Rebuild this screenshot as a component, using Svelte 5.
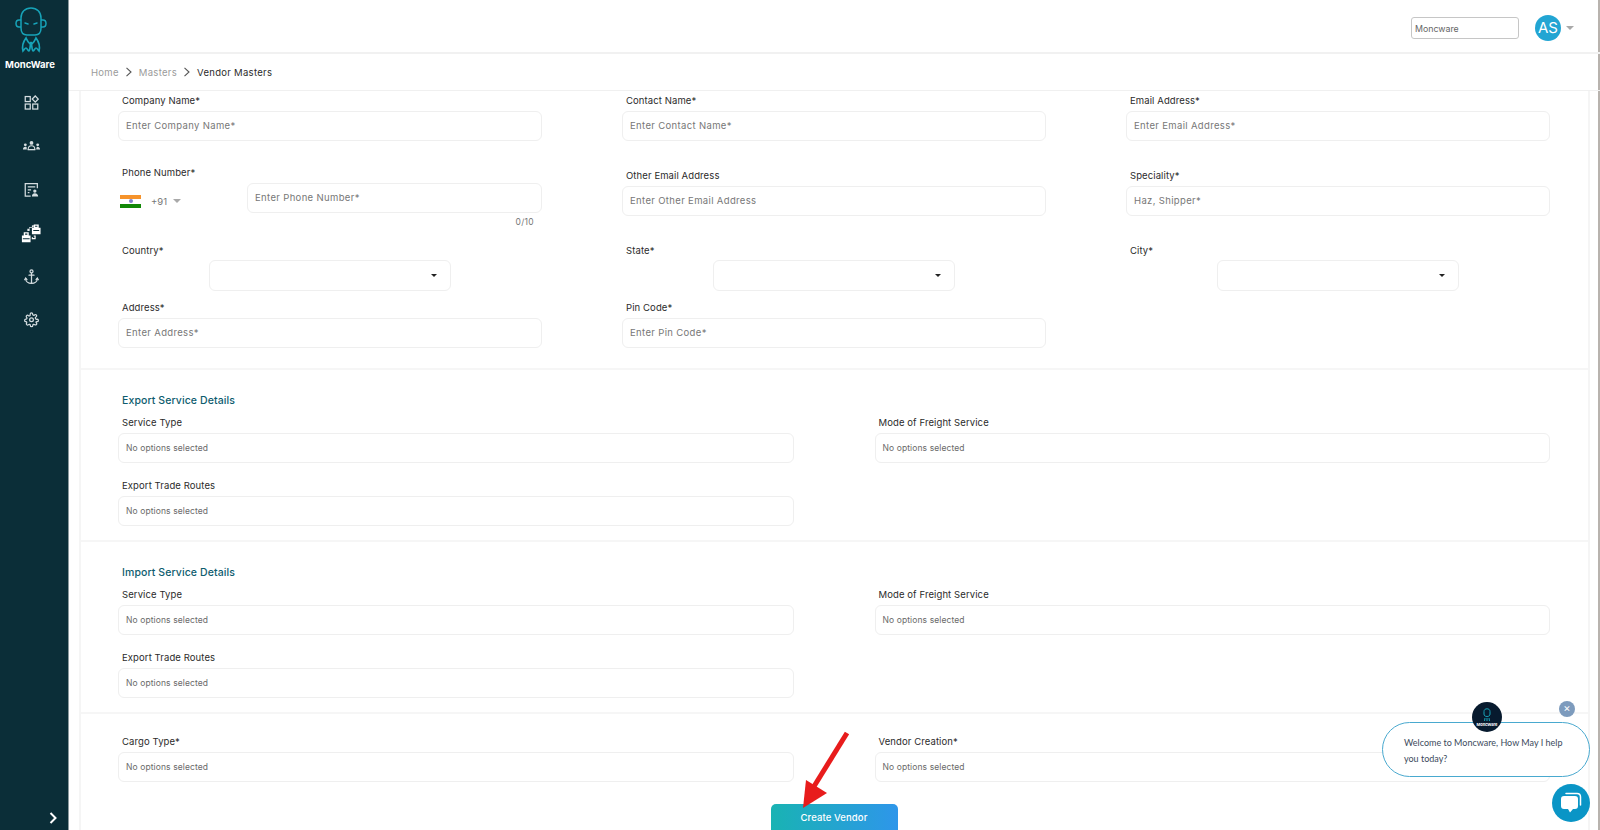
<script>
  const crumbs = ["Home", "Masters"];
  const row1 = [
    { label: "Company Name*", ph: "Enter Company Name*" },
    { label: "Contact Name*", ph: "Enter Contact Name*" },
    { label: "Email Address*", ph: "Enter Email Address*" },
  ];
  const locations = ["Country*", "State*", "City*"];
  const sections = ["Export Service Details", "Import Service Details"];
</script>

{#snippet field(label, ph)}
  <div class="field">
    <span class="lbl">{label}</span>
    <div class="box ph">{ph}</div>
  </div>
{/snippet}

{#snippet multi(label)}
  <div class="field">
    <span class="lbl">{label}</span>
    <div class="box none">No options selected</div>
  </div>
{/snippet}

<div class="app">
  <aside class="side">
    <svg class="logo" width="32" height="46" viewBox="0 0 32 46" fill="none" stroke="#17a3b8" stroke-width="1.5">
      <path d="M6 21V11C6 5 10 1 16 1s10 4 10 10v10c0 4-2 7-6 7h-8c-4 0-6-3-6-7z" />
      <path d="M6 13H4c-2 0-3 1.500-3 3.500S2 20 4 20h2M26 13h2c2 0 3 1.500 3 3.500S30 20 28 20h-2" />
      <path d="M10 16l3 1M19 17l3-1" stroke-linecap="round" />
      <path d="M11 31c-3 4-4 9-3 13 1-1 2-3 3-3s2 3 3 3 1-5 2-9c1 4 1 9 2 9s2-3 3-3 2 2 3 3c1-4 0-9-3-13-1 3-3 5-5 7-2-2-4-4-5-7z" stroke-width="1.700" />
    </svg>
    <div class="brand">MoncWare</div>

    <nav class="nav">
      <svg width="15" viewBox="0 0 18 18" fill="none" stroke="#d5dde0" stroke-width="1.500">
        <rect x="1.500" y="1.500" width="6" height="6" /><rect x="1.500" y="10.500" width="6" height="6" /><rect x="10.500" y="10.500" width="6" height="6" /><path d="M13.500 .8l3.600 3.700-3.600 3.700-3.600-3.700z" />
      </svg>
      <svg width="19" viewBox="0 0 20 18" fill="#d5dde0">
        <circle cx="10" cy="6" r="2" /><path d="M6.500 13c0-2.500 1.500-4 3.500-4s3.500 1.500 3.500 4z" fill="none" stroke="#d5dde0" stroke-width="1.200" /><circle cx="3.500" cy="8" r="1.500" /><circle cx="16.500" cy="8" r="1.500" /><path d="M1 13c0-2 1-3 2.500-3S5 10 5 13zM15 13c0-2 .5-3 1.500-3s2.500 1 2.500 3z" /><rect x="6" y="12.500" width="8" height="1" />
      </svg>
      <svg width="15" viewBox="0 0 18 18" fill="none" stroke="#d5dde0" stroke-width="1.500">
        <path d="M16 7V1.500H1.500v15H8" /><path d="M4.500 5.500h9M4.500 9h4M4.500 12.500h2" /><circle cx="13" cy="10.500" r="2" fill="#d5dde0" stroke="none" /><path d="M9.500 17c0-2.500 1-4 3.500-4s4 1.500 4 4z" fill="#d5dde0" stroke="none" />
      </svg>
      <svg width="20" viewBox="0 0 22 22" fill="#fff">
        <path d="M7 9V6.500h2V4.500h3V3l2-.5v2l-2 1H9.500V9z" opacity=".9" />
        <path d="M12 5.500h2V2h5.500v3.500H21.500v7H12z" /><path d="M13.500 8.500h6.500M15.500 3.800h2.500" stroke="#0b2e38" stroke-width="1.200" />
        <path d="M1 14h2v-3.500h5.500V14h2v7.500H1z" /><path d="M2 17.500h7.500M4.500 12.500h2.500" stroke="#0b2e38" stroke-width="1.200" />
        <path d="M14 14.500h1.500v3h-3v-1.500" fill="none" stroke="#fff" stroke-width="1.300" />
      </svg>
      <svg width="15" viewBox="0 0 18 20" fill="none" stroke="#d5dde0" stroke-width="1.500" stroke-linecap="round">
        <circle cx="9" cy="3.500" r="1.800" /><path d="M9 5.500V18M6 8h6M2 12c0 3.500 3 6 7 6s7-2.500 7-6" /><path d="M.8 13.500L2 11.500l1.500 2M14.500 13.500l1.500-2 1.200 2" />
      </svg>
      <svg width="15" viewBox="0 0 24 24" fill="none" stroke="#d5dde0" stroke-width="2" stroke-linejoin="round">
        <circle cx="12" cy="12" r="3" /><path d="M19.400 15a1.650 1.650 0 0 0 .33 1.820l.06.06a2 2 0 1 1-2.830 2.830l-.06-.06a1.650 1.650 0 0 0-2.820 1.150V21a2 2 0 1 1-4 0v-.09a1.650 1.650 0 0 0-2.820-1.170l-.06.06a2 2 0 1 1-2.830-2.830l.06-.06A1.650 1.650 0 0 0 3.090 15H3a2 2 0 1 1 0-4h.09a1.650 1.650 0 0 0 1.170-2.820l-.06-.06a2 2 0 1 1 2.830-2.830l.06.06A1.650 1.650 0 0 0 9.900 4.200V3a2 2 0 1 1 4 0v.09a1.650 1.650 0 0 0 2.820 1.170l.06-.06a2 2 0 1 1 2.830 2.830l-.06.06A1.650 1.650 0 0 0 20.910 11H21a2 2 0 1 1 0 4h-.09a1.650 1.650 0 0 0-1.510 1z" />
      </svg>
    </nav>

    <svg class="expand" width="10" height="12" viewBox="0 0 10 12" fill="none" stroke="#fff" stroke-width="2"><path d="M2.500 1l5 5-5 5" /></svg>
  </aside>

  <div class="main">
    <header class="top">
      <div class="company">Moncware</div>
      <div class="avatar">AS</div>
      <span class="caret gray"></span>
    </header>

    <div class="crumbs">
      {#each crumbs as c}
        <span class="crumb">{c}</span>
        <svg width="8" height="10" viewBox="0 0 8 10" fill="none" stroke="#555" stroke-width="1.100"><path d="M1.500 .8L6 5 1.500 9.200" /></svg>
      {/each}
      <span class="crumb current">Vendor Masters</span>
    </div>

    <div class="form">
      <section class="block first">
        <div class="cols three">
          {#each row1 as f}{@render field(f.label, f.ph)}{/each}
        </div>

        <div class="cols three r2">
          <div class="field phone">
            <span class="lbl">Phone Number*</span>
            <div class="phone-row">
              <div class="dial">
                <span class="flag"><i></i></span>
                <span class="code">+91</span>
                <span class="caret gray"></span>
              </div>
              <div class="box ph grow">Enter Phone Number*</div>
            </div>
            <div class="count">0/10</div>
          </div>
          {@render field("Other Email Address", "Enter Other Email Address")}
          {@render field("Speciality*", "Haz, Shipper*")}
        </div>

        <div class="cols three r3">
          {#each locations as l}
            <div class="field">
              <span class="lbl">{l}</span>
              <div class="box select"><span class="caret dark"></span></div>
            </div>
          {/each}
        </div>

        <div class="cols three r4">
          {@render field("Address*", "Enter Address*")}
          {@render field("Pin Code*", "Enter Pin Code*")}
        </div>
      </section>

      {#each sections as s}
        <section class="block svc">
          <h3>{s}</h3>
          <div class="cols two">
            {@render multi("Service Type")}
            {@render multi("Mode of Freight Service")}
          </div>
          <div class="cols two r5">
            {@render multi("Export Trade Routes")}
          </div>
        </section>
      {/each}

      <section class="block last">
        <div class="cols two">
          {@render multi("Cargo Type*")}
          {@render multi("Vendor Creation*")}
        </div>
        <div class="actions"><button type="button">Create Vendor</button></div>
      </section>
    </div>
  </div>

  <!-- annotation arrow from the screenshot -->
  <svg class="arrow" width="60" height="90" viewBox="0 0 60 90">
    <path d="M52 3L18 58" stroke="#e81c1c" stroke-width="5" fill="none" />
    <path d="M11 50L32 63 8 78z" fill="#e81c1c" />
  </svg>

  <div class="chat">
    <div class="bubble">Welcome to Moncware, How May I help you today?</div>
    <div class="bot">
      <svg width="10" height="14" viewBox="0 0 10 14" fill="none" stroke="#17a3b8" stroke-width="1"><path d="M2 6V3.500C2 1.500 3.500 .8 5 .8s3 .7 3 2.700V6c0 1.500-1 2.500-3 2.500S2 7.500 2 6z" /><path d="M3 10l-.5 3M7 10l.5 3M5 10v3" /></svg>
      <span>MoncWare</span>
    </div>
    <div class="close">×</div>
    <div class="launcher">
      <svg width="24" height="24" viewBox="0 0 24 24"><path d="M7 2.500h11c2 0 3.500 1.500 3.500 3.500v8" fill="none" stroke="#fff" stroke-width="1.500" stroke-linecap="round" /><path d="M5 5h11c2 0 3 1 3 3v7c0 2-1 3-3 3h-2l-3 3.500L9 18H5c-2 0-3-1-3-3V8c0-2 1-3 3-3z" fill="#fff" /></svg>
    </div>
  </div>
</div>

<style>
  :global(body) { margin: 0; background: #fff; }
  .app {
    position: relative;
    display: flex;
    width: 1600px;
    height: 830px;
    overflow: hidden;
    font-family: Inter, "Liberation Sans", sans-serif;
    color: #2b2b2b;
    background: #fff;
  }

  .side {
    position: relative;
    flex: 0 0 68px;
    display: flex;
    flex-direction: column;
    align-items: center;
    background: #0b2e38;
    box-shadow: 1px 0 0 #8b9a9e;
  }
  .logo { margin-top: 7px; margin-left: -7px; }
  .brand { margin-top: 5px; font-size: 9.500px; font-weight: 700; color: #fff; line-height: 14px; margin-left: -8px; }
  .nav {
    display: flex; flex-direction: column; align-items: center;
    margin-top: 8.500px; margin-left: -6px;
  }
  .nav svg { display: block; height: 43.600px; }
  .expand { position: absolute; left: 48px; bottom: 6px; }

  .main { flex: 1; min-width: 0; display: flex; flex-direction: column; box-shadow: inset -2px 0 0 #b8b3ae; }

  .top {
    flex: 0 0 54px;
    display: flex; align-items: center; justify-content: flex-end;
    padding: 3px 26px 0 0;
    box-sizing: border-box;
    border-bottom: 2px solid #f1f1f1;
  }
  .company {
    width: 108px; height: 22px; box-sizing: border-box;
    border: 1px solid #c6c6c6; border-radius: 3px;
    font-size: 8.800px; line-height: 22px; padding-left: 3px; color: #666;
  }
  .avatar {
    width: 26px; height: 26px; border-radius: 50%;
    margin-left: 16px; margin-right: 5px;
    background: #22a5d3; color: #fff;
    font-size: 15px; font-weight: 400; line-height: 26px; text-align: center;
  }
  .caret { display: inline-block; width: 0; height: 0; border-left: 4px solid transparent; border-right: 4px solid transparent; }
  .caret.gray { border-top: 4px solid #a9a9a9; }
  .caret.dark { border-left-width: 3px; border-right-width: 3px; border-top: 3px solid #222; }

  .crumbs {
    flex: 0 0 37px;
    box-sizing: border-box;
    display: flex; align-items: center; gap: 6px;
    padding-left: 23px;
    border-bottom: 1.500px solid #f0f0f0;
    font-size: 9.500px; letter-spacing: .3px;
  }
  .crumb { color: #9b9b9b; }
  .crumb.current { color: #2b2b2b; }

  .form {
    flex: 1;
    margin: 0 10px 0 11px;
    border-left: 2px solid #f5f5f5;
    border-right: 2px solid #f5f5f5;
    min-height: 0;
  }
  .block { padding: 0 38px 0 37px; border-bottom: 2px solid #f6f6f6; }
  .block.first { padding-top: 2px; padding-bottom: 20px; }
  .block.svc { padding-top: 23px; padding-bottom: 14px; }
  .block.last { border-bottom: 0; padding-top: 20px; }

  .cols { display: grid; column-gap: 80px; align-items: start; }
  .three { grid-template-columns: repeat(3, 1fr); }
  .two { grid-template-columns: repeat(2, 1fr); column-gap: 81px; }
  .r2 { margin-top: 27px; }
  .r3 { margin-top: 27px; }
  .r4 { margin-top: 9px; }
  .r5 { margin-top: 15px; }

  .field { min-width: 0; }
  .lbl {
    display: block; height: 16px; line-height: 16px;
    margin-bottom: 2px; padding-left: 4px;
    font-size: 9.500px; letter-spacing: .1px; color: #2b2b2b;
  }
  .box {
    height: 30px; box-sizing: border-box;
    border: 1.500px solid #efefef; border-radius: 6px;
    padding-left: 7px;
    background: #fff;
  }
  .ph { font-size: 9.500px; letter-spacing: .35px; line-height: 28.500px; color: #777; }
  .none { font-size: 8.500px; letter-spacing: .1px; line-height: 29px; color: #6a6a6a; }

  .phone { margin-top: -3px; }
  .phone-row { display: flex; align-items: flex-start; margin-top: 2px; }
  .grow { flex: 1; }
  .dial { flex: 0 0 129px; display: flex; align-items: center; height: 36px; padding-left: 2px; box-sizing: border-box; font-size: 9.500px; color: #777; }
  .flag {
    position: relative; width: 21px; height: 13px; margin-right: 10px;
    background: linear-gradient(#f6932b 0 33%, #fff 33% 66%, #128807 66%);
  }
  .flag i { position: absolute; left: 8.500px; top: 4.500px; width: 4px; height: 4px; border-radius: 50%; background: #7f7fc8; }
  .code { margin-right: 6px; }
  .count { height: 0; margin-top: -5px; line-height: 16px; font-size: 8.500px; letter-spacing: .3px; text-align: right; padding-right: 8px; color: #777; }

  .select { width: 242px; margin: 0 auto; position: relative; display: flex; align-items: center; justify-content: flex-end; padding-right: 13px; height: 31px; }
  .r3 .lbl { margin-bottom: 1px; }

  h3 { margin: 0 0 6px 4px; font-size: 10.500px; font-weight: 500; line-height: 16px; letter-spacing: .1px; color: #0e5c6e; }

  .actions { display: flex; justify-content: center; margin-top: 22px; }
  button {
    width: 127px; height: 30px; border: 0; border-radius: 5px;
    background: linear-gradient(90deg, #19b3b3, #2e96ea);
    color: #fff; font: 500 9.500px Inter, "Liberation Sans", sans-serif; letter-spacing: .1px;
    padding-bottom: 4px;
  }

  .arrow { position: absolute; left: 795px; top: 730px; }

  .chat { position: absolute; inset: 0; pointer-events: none; }
  .bubble {
    position: absolute; left: 1382px; top: 722px;
    width: 208px; height: 55px; box-sizing: border-box;
    padding: 12px 16px 0 21px;
    border: 1px solid #49a9cf; border-radius: 28px;
    background: #fff;
    font-family: Lato, sans-serif;
    font-size: 9px; line-height: 15.500px; color: #3c4a5c;
  }
  .bot {
    position: absolute; left: 1472px; top: 702px;
    width: 30px; height: 30px; border-radius: 50%;
    background: #071a2e;
    display: flex; flex-direction: column; align-items: center; justify-content: center;
  }
  .bot span { font-size: 4px; font-weight: 700; color: #fff; line-height: 5px; }
  .close {
    position: absolute; left: 1559px; top: 701px;
    width: 16px; height: 16px; border-radius: 50%;
    background: #7d9bbd; color: #fff; font-size: 11px; line-height: 15px; text-align: center;
  }
  .launcher {
    position: absolute; left: 1552px; top: 784px;
    width: 38px; height: 38px; border-radius: 50%;
    background: #0a95c6;
    display: flex; align-items: center; justify-content: center;
  }
</style>
